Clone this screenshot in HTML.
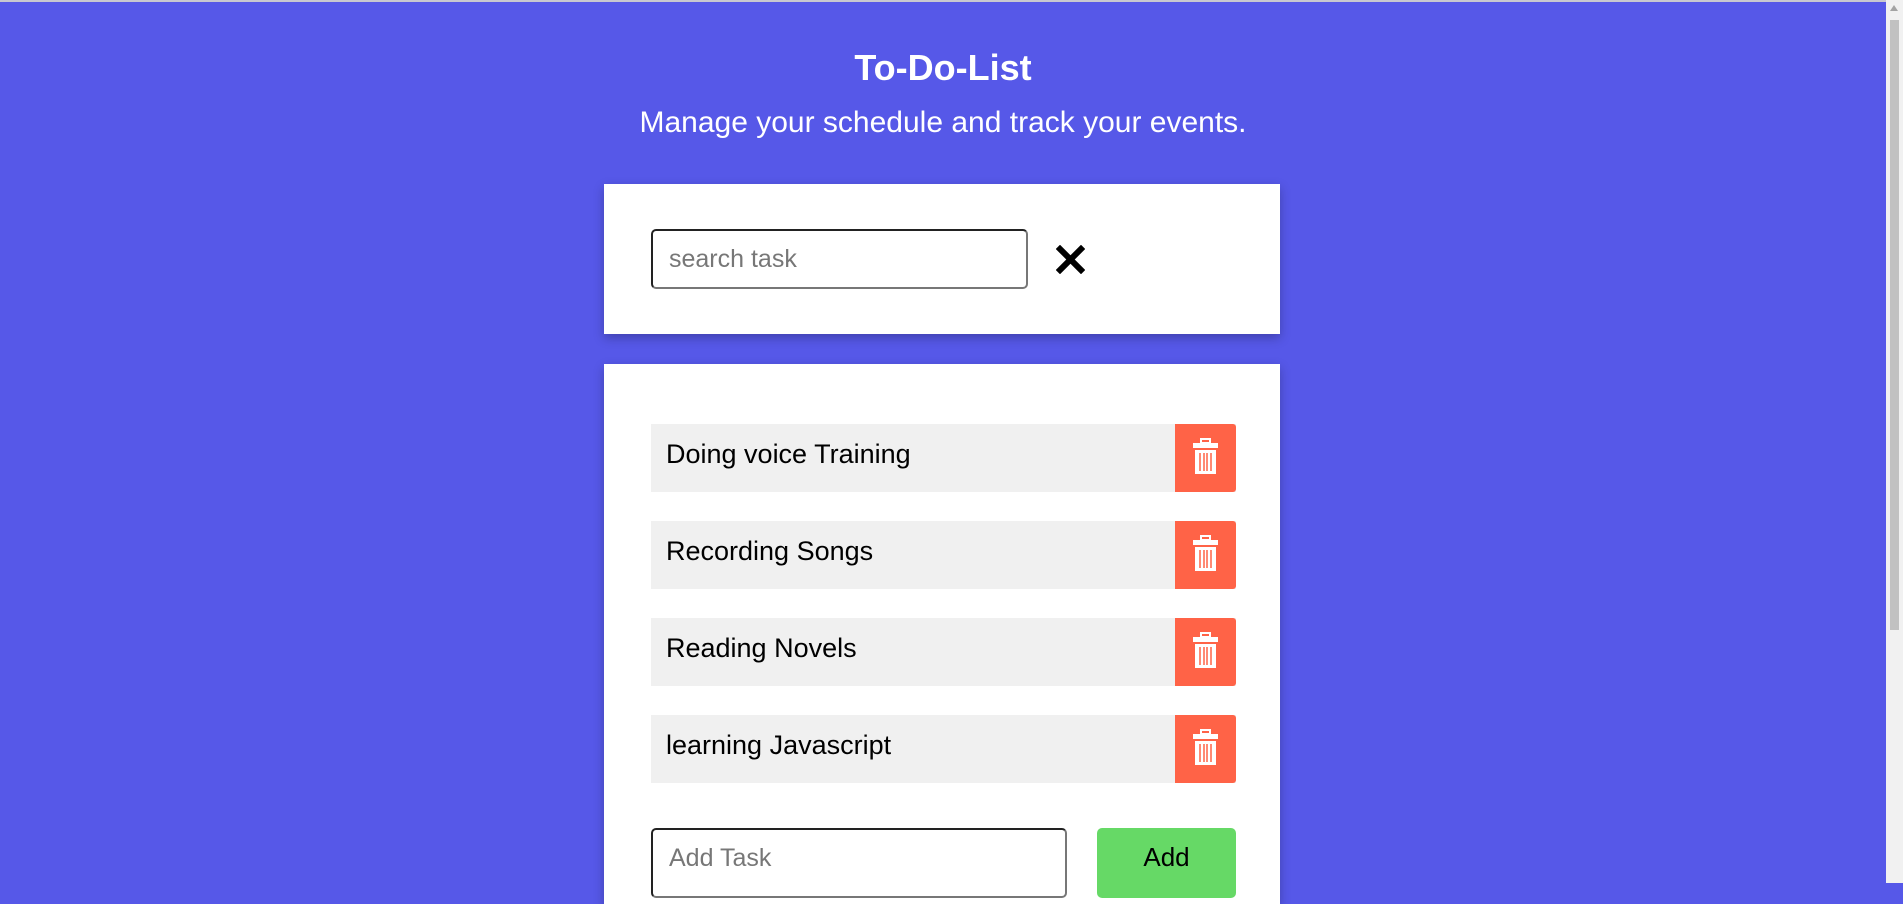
<!DOCTYPE html>
<html><head><meta charset="utf-8"><style>
html,body{margin:0;padding:0;}
body{width:1903px;height:883px;background:#5658e8;font-family:"Liberation Sans",Arial,sans-serif;position:relative;overflow:hidden;}
.topline{position:absolute;left:0;top:0;width:1903px;height:2px;background:#c8c8d0;}
.sb{position:absolute;right:0;top:0;width:17px;height:883px;background:#f1f1f1;}
.sb .th{position:absolute;left:4px;top:20px;width:9px;height:610px;background:#c1c1c1;}
.sb .ar{position:absolute;left:4px;top:5px;width:0;height:0;border-left:4px solid transparent;border-right:4px solid transparent;border-bottom:6px solid #a3a3a3;}
h1{position:absolute;left:0;width:1886px;top:46px;margin:0;text-align:center;color:#fff;font-size:36px;font-weight:bold;line-height:44px;}
.sub{position:absolute;left:0;width:1886px;top:105px;text-align:center;color:#fff;font-size:30px;line-height:36px;}
.card{position:absolute;left:604px;width:676px;background:#fff;box-shadow:0 4px 10px rgba(0,0,0,.25);}
.inp{position:absolute;box-sizing:border-box;border:2px solid;border-color:#222 #777 #777 #222;border-radius:5px;background:#fff;color:#777;font-size:25px;padding-left:16px;}
.row{position:absolute;left:47px;width:585px;height:68px;background:#f0f0f0;}
.row span{position:absolute;left:15px;top:15px;font-size:27px;color:#000;}
.del{position:absolute;right:0;top:0;width:61px;height:68px;background:#ff6347;border-radius:0 3px 3px 0;}
.del svg{position:absolute;left:17px;top:14px;}
.add{position:absolute;left:493px;top:464px;width:139px;height:70px;background:#66d966;border-radius:5px;font-size:26px;text-align:center;line-height:58px;}
</style></head><body>
<div class="topline"></div>
<h1>To-Do-List</h1>
<div class="sub">Manage your schedule and track your events.</div>
<div class="card" style="top:184px;height:150px;">
  <div class="inp" style="left:47px;top:45px;width:377px;height:60px;line-height:56px;">search task</div>
  <svg style="position:absolute;left:452px;top:61px" width="29" height="29" viewBox="0 0 29 29"><path d="M4 4L25 25M25 4L4 25" stroke="#000" stroke-width="6" stroke-linecap="square"/></svg>
</div>
<div class="card" style="top:364px;height:540px;">
  <div class="row" style="top:60px"><span>Doing voice Training</span><div class="del"><svg width="27" height="38" viewBox="0 0 27 38"><rect x="9" y="1" width="9" height="4" fill="none" stroke="#fff" stroke-width="2"/><rect x="1" y="5" width="25" height="5" fill="#fff"/><path d="M3 12h21v24H3z" fill="#fff"/><path d="M8 15v18M12 15v18M15 15v18M19 15v18" stroke="#ff6347" stroke-width="1.5"/></svg></div></div>
  <div class="row" style="top:157px"><span>Recording Songs</span><div class="del"><svg width="27" height="38" viewBox="0 0 27 38"><rect x="9" y="1" width="9" height="4" fill="none" stroke="#fff" stroke-width="2"/><rect x="1" y="5" width="25" height="5" fill="#fff"/><path d="M3 12h21v24H3z" fill="#fff"/><path d="M8 15v18M12 15v18M15 15v18M19 15v18" stroke="#ff6347" stroke-width="1.5"/></svg></div></div>
  <div class="row" style="top:254px"><span>Reading Novels</span><div class="del"><svg width="27" height="38" viewBox="0 0 27 38"><rect x="9" y="1" width="9" height="4" fill="none" stroke="#fff" stroke-width="2"/><rect x="1" y="5" width="25" height="5" fill="#fff"/><path d="M3 12h21v24H3z" fill="#fff"/><path d="M8 15v18M12 15v18M15 15v18M19 15v18" stroke="#ff6347" stroke-width="1.5"/></svg></div></div>
  <div class="row" style="top:351px"><span>learning Javascript</span><div class="del"><svg width="27" height="38" viewBox="0 0 27 38"><rect x="9" y="1" width="9" height="4" fill="none" stroke="#fff" stroke-width="2"/><rect x="1" y="5" width="25" height="5" fill="#fff"/><path d="M3 12h21v24H3z" fill="#fff"/><path d="M8 15v18M12 15v18M15 15v18M19 15v18" stroke="#ff6347" stroke-width="1.5"/></svg></div></div>
  <div class="inp" style="left:47px;top:464px;width:416px;height:70px;line-height:56px;">Add Task</div>
  <div class="add">Add</div>
</div>
<div class="sb"><div class="ar"></div><div class="th"></div></div>
</body></html>
